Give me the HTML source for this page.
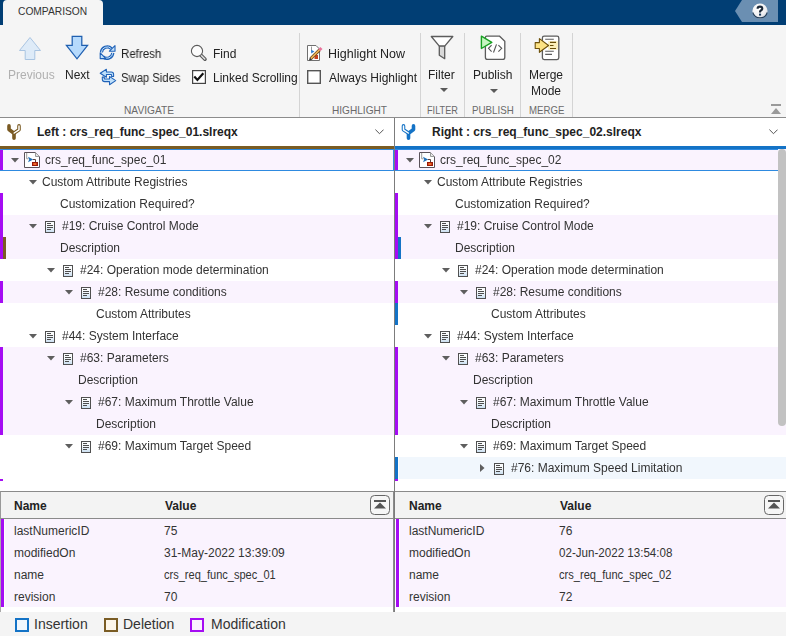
<!DOCTYPE html>
<html><head><meta charset="utf-8"><style>
*{box-sizing:border-box}
html,body{margin:0;padding:0}
body{width:786px;height:636px;overflow:hidden;position:relative;background:#f4f4f4;font-family:"Liberation Sans", sans-serif;color:#222}
.a{position:absolute}
.ic{position:absolute;display:block}
.bg{position:absolute;height:22px}
.bar{position:absolute;width:3px;height:22px}
.tt{position:absolute;height:22px;line-height:22px;font-size:12px;color:#333;white-space:nowrap;will-change:transform}
.rb{position:absolute;font-size:12px;color:#222;white-space:nowrap;line-height:14px;will-change:transform}
.lab{position:absolute;top:103px;font-size:11px;color:#6a6a6a;white-space:nowrap;line-height:14px;transform-origin:0 0}
.ph{position:absolute;top:498px;font-size:12px;font-weight:bold;color:#222;line-height:16px}
.pt{position:absolute;height:22px;line-height:22px;font-size:12px;color:#333;white-space:nowrap;transform-origin:0 0}
.lg{position:absolute;top:615px;font-size:14px;color:#333;line-height:18px;white-space:nowrap}
.sep{position:absolute;top:33px;width:1px;height:84px;background:#d4d4d4}
</style></head><body>
<!-- top bar -->
<div class="a" style="left:0;top:0;width:786px;height:25px;background:#013e74"></div>
<div class="a" style="left:3px;top:0px;width:100px;height:25px;background:#f5f5f5;border-radius:4px 4px 0 0"></div>
<div class="a" style="left:18px;top:4px;font-size:11px;color:#333;line-height:14px;transform:scaleX(0.93);transform-origin:0 0">COMPARISON</div>
<svg class="ic" style="left:735px;top:0" width="44" height="23" viewBox="0 0 44 23"><defs><radialGradient id="hg" cx="0.4" cy="0.3" r="0.8"><stop offset="0" stop-color="#ffffff"/><stop offset="0.6" stop-color="#f0f0f2"/><stop offset="1" stop-color="#c8ccd4"/></radialGradient></defs><path d="M7 0H43V22H7L0 11Z" fill="#6b8fb2"/>
<circle cx="25" cy="11.1" r="7.6" fill="url(#hg)"/>
<path d="M17.8 12.5A7.5 7.5 0 0 0 32.2 12.5" fill="none" stroke="#233f5c" stroke-width="1.1"/>
<path d="M22.6 8.7Q22.6 6.6 25 6.6Q27.3 6.6 27.3 8.5Q27.3 9.7 25.9 10.5Q25 11 25 12V12.6" fill="none" stroke="#1b2838" stroke-width="2.1"/><rect x="24" y="13.6" width="2.1" height="2" fill="#1b3a5c"/></svg>
<!-- ribbon -->
<div class="a" style="left:0;top:25px;width:786px;height:92px;background:#f5f5f5"></div>
<div class="a" style="left:0;top:117px;width:786px;height:1px;background:#8c8c8c"></div>
<div class="sep" style="left:299px"></div>
<div class="sep" style="left:420px"></div>
<div class="sep" style="left:464px"></div>
<div class="sep" style="left:520px"></div>
<div class="sep" style="left:572px"></div>
<!-- ribbon content -->
<svg class="ic" style="left:19px;top:37px" width="23" height="24" viewBox="0 0 23 24"><path d="M11 0.5L21.5 13.5H15.8V22.5H6.2V13.5H0.5Z" fill="#deebf8" stroke="#a9c4e1" stroke-width="1"/></svg>
<div class="rb" style="left:7.8px;top:68px;color:#b0b0b0">Previous</div>
<svg class="ic" style="left:65px;top:35px" width="24" height="25" viewBox="0 0 24 25"><path d="M7.2 1.4H16.8V10.3H22.6L12 23.8L1.4 10.3H7.2Z" fill="#b6dafc" stroke="#1f5fb0" stroke-width="1.25" stroke-linejoin="miter"/></svg>
<div class="rb" style="left:64.5px;top:68px">Next</div>
<!-- Refresh -->
<svg class="ic" style="left:99px;top:44px" width="18" height="17" viewBox="0 0 18 17">
<path d="M2.4 8.4A5.9 5.9 0 0 1 12.4 4.6" fill="none" stroke="#1f62b8" stroke-width="3.2"/>
<path d="M2.4 8.4A5.9 5.9 0 0 1 12.4 4.6" fill="none" stroke="#c4e2fb" stroke-width="1"/>
<path d="M16 1.6V7.2H10.4Z" fill="#c4e2fb" stroke="#1f62b8" stroke-width="1.1" stroke-linejoin="round"/>
<path d="M13.8 8.8A5.9 5.9 0 0 1 3.8 12.6" fill="none" stroke="#1f62b8" stroke-width="3.2"/>
<path d="M13.8 8.8A5.9 5.9 0 0 1 3.8 12.6" fill="none" stroke="#c4e2fb" stroke-width="1"/>
<path d="M1.2 8.8V14.6H6.8Z" fill="#c4e2fb" stroke="#1f62b8" stroke-width="1.1" stroke-linejoin="round"/>
</svg>
<div class="rb" style="left:121px;top:47px;transform:scaleX(0.96);transform-origin:0 0">Refresh</div>
<!-- Swap -->
<svg class="ic" style="left:98px;top:66px" width="20" height="22" viewBox="0 0 20 22">
<path d="M2.2 7.2L8.4 3.2V5.9H13.3Q15.6 5.9 15.6 8.2V10.4H13.6V8.9Q13.6 8.5 13.2 8.5H8.4V11.2Z" fill="#bfe0fb" stroke="#1f62b8" stroke-width="1.05" stroke-linejoin="round"/>
<path d="M17.7 14.6L11.5 18.8V15.6H6.6Q4.3 15.6 4.3 13.3V11.1H6.3V12.6Q6.3 13 6.7 13H11.5V10.4Z" fill="#bfe0fb" stroke="#1f62b8" stroke-width="1.05" stroke-linejoin="round"/>
</svg>
<div class="rb" style="left:121px;top:71px;transform:scaleX(0.94);transform-origin:0 0">Swap Sides</div>
<!-- Find -->
<svg class="ic" style="left:190px;top:44px" width="18" height="18" viewBox="0 0 18 18">
<path d="M10 10.2L15 15.2" stroke="#5a5a5a" stroke-width="3.6" stroke-linecap="round"/>
<path d="M10.3 10.5L14.8 15" stroke="#e2e2e2" stroke-width="1.4" stroke-linecap="round"/>
<circle cx="7" cy="7" r="5.6" fill="#fcfcfc" stroke="#5a5a5a" stroke-width="1.1"/>
</svg>
<div class="rb" style="left:213px;top:47px">Find</div>
<svg class="ic" style="left:192px;top:70px" width="14" height="14" viewBox="0 0 14 14"><rect x="0.6" y="0.6" width="12.8" height="12.8" fill="#fff" stroke="#444" stroke-width="1.2"/><path d="M2.3 6.6L5.4 9.9L11.3 3.2" fill="none" stroke="#111" stroke-width="2.2"/></svg>
<div class="rb" style="left:213px;top:71px">Linked Scrolling</div>
<div class="lab" style="left:124px;transform:scaleX(0.925)">NAVIGATE</div>
<!-- Highlight now -->
<svg class="ic" style="left:306px;top:44px" width="17" height="18" viewBox="0 0 17 18">
<path d="M1.5 1.5H10L13.5 5V16.5H1.5Z" fill="#fff" stroke="#707070" stroke-width="1"/>
<path d="M5.5 2.5V7.5" fill="none" stroke="#999" stroke-width="1"/>
<path d="M5.2 5.8L8.4 7.6L5.2 9.4Z" fill="#2a7ad0"/>
<rect x="8.5" y="11" width="3.5" height="4" fill="#c8401e"/>
<path d="M4.8 14.6L13.6 5.8" stroke="#6a4a1e" stroke-width="3.1"/>
<path d="M4.8 14.6L13.6 5.8" stroke="#f1b457" stroke-width="1.6"/>
<path d="M3 16.6L3.8 13.4L6.2 15.8Z" fill="#333"/>
<path d="M13.4 6L15.4 4" stroke="#e8739b" stroke-width="3.1"/>
</svg>
<div class="rb" style="left:328px;top:47px;transform:scaleX(1.04);transform-origin:0 0">Highlight Now</div>
<svg class="ic" style="left:307px;top:70px" width="14" height="14" viewBox="0 0 14 14"><rect x="0.7" y="0.7" width="12.6" height="12.6" fill="#fff" stroke="#555" stroke-width="1.4"/></svg>
<div class="rb" style="left:329px;top:71px">Always Highlight</div>
<div class="lab" style="left:332px;transform:scaleX(0.917)">HIGHLIGHT</div>
<!-- Filter -->
<svg class="ic" style="left:428px;top:32px" width="28" height="30" viewBox="0 0 28 30">
<path d="M3.3 4.5H24.8L16.7 14.2H11.3Z" fill="#fff" stroke="#5c5c5c" stroke-width="1.3" stroke-linejoin="round"/>
<path d="M11.3 14.2H16.7V26.7L11.3 23.3Z" fill="#d9d9d9" stroke="#5c5c5c" stroke-width="1.3" stroke-linejoin="round"/>
</svg>
<div class="rb" style="left:428px;top:68px">Filter</div>
<svg class="ic" style="left:439.5px;top:88px" width="8" height="4" viewBox="0 0 8 4"><path d="M0 0H8L4 4Z" fill="#5a5a5a"/></svg>
<div class="lab" style="left:427px;transform:scaleX(0.833)">FILTER</div>
<!-- Publish -->
<svg class="ic" style="left:476px;top:32px" width="32" height="30" viewBox="0 0 32 30">
<path d="M10.8 4.2H23.6L28.8 9.2V25.2Q28.8 27.4 26.6 27.4H11.6Q9.4 27.4 9.4 25.2V5.6Q9.4 4.2 10.8 4.2Z" fill="#fff" stroke="#5c5c5c" stroke-width="1.3"/>
<path d="M15.6 13.2L12.5 16.3L15.6 19.6M20.5 12.4L17.5 20.5M22.4 13.2L25.7 16.3L22.4 19.6" fill="none" stroke="#555" stroke-width="1.1"/>
<path d="M5.4 4.2L15.8 10.4L5.4 16.5Z" fill="#c6f6c0" stroke="#17a021" stroke-width="1.4" stroke-linejoin="round"/>
</svg>
<div class="rb" style="left:472.5px;top:68px">Publish</div>
<svg class="ic" style="left:489.5px;top:89px" width="8" height="4" viewBox="0 0 8 4"><path d="M0 0H8L4 4Z" fill="#5a5a5a"/></svg>
<div class="lab" style="left:471.5px;transform:scaleX(0.887)">PUBLISH</div>
<!-- Merge -->
<svg class="ic" style="left:530px;top:32px" width="32" height="30" viewBox="0 0 32 30">
<rect x="12.4" y="4.2" width="16.4" height="23.4" rx="1.8" fill="#fff" stroke="#5c5c5c" stroke-width="1.3"/>
<path d="M15.2 7.3H23.8M15.2 19.3H23.8M15.2 22.4H22" stroke="#5c5c5c" stroke-width="1.1"/>
<rect x="18.2" y="9.2" width="9.6" height="8.5" fill="#fcefb9"/>
<path d="M20 10.4H26M20 13.5H23.5M20 16.5H26" stroke="#6a4e08" stroke-width="1.2"/>
<path d="M5.2 10.6H9.4V6.6L18.6 13.5L9.4 20.3V16.5H5.2Z" fill="#fde383" stroke="#6f520c" stroke-width="1.1" stroke-linejoin="round"/>
</svg>
<div class="rb" style="left:529px;top:68px">Merge</div>
<div class="rb" style="left:530.5px;top:84px">Mode</div>
<div class="lab" style="left:529px;transform:scaleX(0.877)">MERGE</div>
<!-- collapse ribbon -->
<svg class="ic" style="left:771px;top:104px" width="10" height="10" viewBox="0 0 10 10"><rect x="0" y="0" width="10" height="2" fill="#9a9a9a"/><path d="M0 10H10L5 4Z" fill="#9a9a9a"/></svg>

<!-- header -->
<div class="a" style="left:0;top:118px;width:786px;height:28px;background:#fff"></div>
<svg class="ic" style="left:0;top:118px" width="28" height="28" viewBox="0 0 28 28">
<path d="M9 7.9V11.5L14 15.3V20.2" fill="none" stroke="#7a5a22" stroke-width="3.6" stroke-linecap="round" stroke-linejoin="round"/>
<path d="M19 7.9V11.8L14.2 15" fill="none" stroke="#7a5a22" stroke-width="3.6" stroke-linecap="round" stroke-linejoin="round"/>
<path d="M19 7.9V11.8L14.2 15" fill="none" stroke="#fff" stroke-width="1.5" stroke-linecap="round" stroke-linejoin="round"/>
</svg>
<div class="a" style="left:37px;top:125px;font-size:12px;font-weight:bold;line-height:14px;color:#222">Left : crs_req_func_spec_01.slreqx</div>
<svg class="ic" style="left:375px;top:128.5px" width="9" height="6" viewBox="0 0 9 6"><path d="M0.4 0.6L4.5 4.7L8.6 0.6" fill="none" stroke="#555" stroke-width="1"/></svg>
<svg class="ic" style="left:395px;top:118px" width="28" height="28" viewBox="0 0 28 28">
<path d="M18.5 7.9V11.5L13.5 15.3V20.2" fill="none" stroke="#1473c6" stroke-width="3.6" stroke-linecap="round" stroke-linejoin="round"/>
<path d="M8.5 7.9V11.8L13.3 15" fill="none" stroke="#1473c6" stroke-width="3.6" stroke-linecap="round" stroke-linejoin="round"/>
<path d="M8.5 7.9V11.8L13.3 15" fill="none" stroke="#fff" stroke-width="1.5" stroke-linecap="round" stroke-linejoin="round"/>
</svg>
<div class="a" style="left:432px;top:125px;font-size:12px;font-weight:bold;line-height:14px;color:#222">Right : crs_req_func_spec_02.slreqx</div>
<svg class="ic" style="left:769px;top:128.5px" width="9" height="6" viewBox="0 0 9 6"><path d="M0.4 0.6L4.5 4.7L8.6 0.6" fill="none" stroke="#555" stroke-width="1"/></svg>
<!-- tree backgrounds -->
<div class="a" style="left:0;top:149px;width:394px;height:342px;background:#fff"></div>
<div class="a" style="left:395px;top:149px;width:391px;height:342px;background:#fff"></div>
<div class="bg" style="left:3px;top:149px;width:391px;background:#faf3fe"></div>
<div class="bar" style="left:0px;top:149px;background:#a50cf3"></div>
<svg class="ic" style="left:11px;top:158px" width="8" height="5" viewBox="0 0 8 5"><path d="M0 0H8L4 4.5Z" fill="#5e5e5e"/></svg>
<svg class="ic" style="left:24px;top:152px" width="16" height="16" viewBox="0 0 16 16">
<path d="M0.5 0.5H11.5L15.5 4.5V15.5H0.5Z" fill="#fff" stroke="#5a525a"/>
<path d="M11.5 0.5V4.5H15.5" fill="#e6e6e6" stroke="#9a9a9a"/>
<path d="M2.7 1V6.8H4.5" fill="none" stroke="#9a9a9a" stroke-width="1"/>
<path d="M4 4.8L9.2 7.5L4 10.2L5.2 7.5Z" fill="#1f6fb8"/>
<path d="M9 7.5H11.5V10" fill="none" stroke="#5a4040" stroke-width="1"/>
<rect x="8" y="10" width="6" height="4" fill="#9a1a08"/>
<rect x="9.3" y="11" width="3.2" height="2" fill="#f06a2a"/>
</svg>
<div class="tt" style="left:45px;top:149px">crs_req_func_spec_01</div>
<svg class="ic" style="left:29px;top:180px" width="8" height="5" viewBox="0 0 8 5"><path d="M0 0H8L4 4.5Z" fill="#5e5e5e"/></svg>
<div class="tt" style="left:42px;top:171px">Custom Attribute Registries</div>
<div class="bar" style="left:0px;top:193px;background:#a50cf3"></div>
<div class="tt" style="left:60px;top:193px">Customization Required?</div>
<div class="bg" style="left:3px;top:215px;width:391px;background:#faf3fe"></div>
<div class="bar" style="left:0px;top:215px;background:#a50cf3"></div>
<svg class="ic" style="left:29px;top:224px" width="8" height="5" viewBox="0 0 8 5"><path d="M0 0H8L4 4.5Z" fill="#5e5e5e"/></svg>
<svg class="ic" style="left:45px;top:221px" width="10" height="12" viewBox="0 0 10 12"><defs><linearGradient id="dg" x1="0" y1="0" x2="0" y2="1"><stop offset="0.35" stop-color="#fafcfd"/><stop offset="1" stop-color="#c9def0"/></linearGradient></defs><rect x="0.5" y="0.5" width="9" height="11" fill="url(#dg)" stroke="#505050"/><path d="M2 2.5H6M2 4.5H8M2 6.5H8M2 8.5H6" stroke="#4d4d4d" stroke-width="1"/></svg>
<div class="tt" style="left:62px;top:215px">#19: Cruise Control Mode</div>
<div class="bg" style="left:3px;top:237px;width:391px;background:#faf3fe"></div>
<div class="bar" style="left:0px;top:237px;background:#a50cf3"></div>
<div class="bar" style="left:3px;top:237px;background:#7a5c24"></div>
<div class="tt" style="left:60px;top:237px">Description</div>
<svg class="ic" style="left:47px;top:268px" width="8" height="5" viewBox="0 0 8 5"><path d="M0 0H8L4 4.5Z" fill="#5e5e5e"/></svg>
<svg class="ic" style="left:63px;top:265px" width="10" height="12" viewBox="0 0 10 12"><defs><linearGradient id="dg" x1="0" y1="0" x2="0" y2="1"><stop offset="0.35" stop-color="#fafcfd"/><stop offset="1" stop-color="#c9def0"/></linearGradient></defs><rect x="0.5" y="0.5" width="9" height="11" fill="url(#dg)" stroke="#505050"/><path d="M2 2.5H6M2 4.5H8M2 6.5H8M2 8.5H6" stroke="#4d4d4d" stroke-width="1"/></svg>
<div class="tt" style="left:80px;top:259px">#24: Operation mode determination</div>
<div class="bg" style="left:3px;top:281px;width:391px;background:#faf3fe"></div>
<div class="bar" style="left:0px;top:281px;background:#a50cf3"></div>
<svg class="ic" style="left:65px;top:290px" width="8" height="5" viewBox="0 0 8 5"><path d="M0 0H8L4 4.5Z" fill="#5e5e5e"/></svg>
<svg class="ic" style="left:81px;top:287px" width="10" height="12" viewBox="0 0 10 12"><defs><linearGradient id="dg" x1="0" y1="0" x2="0" y2="1"><stop offset="0.35" stop-color="#fafcfd"/><stop offset="1" stop-color="#c9def0"/></linearGradient></defs><rect x="0.5" y="0.5" width="9" height="11" fill="url(#dg)" stroke="#505050"/><path d="M2 2.5H6M2 4.5H8M2 6.5H8M2 8.5H6" stroke="#4d4d4d" stroke-width="1"/></svg>
<div class="tt" style="left:98px;top:281px">#28: Resume conditions</div>
<div class="tt" style="left:96px;top:303px">Custom Attributes</div>
<svg class="ic" style="left:29px;top:334px" width="8" height="5" viewBox="0 0 8 5"><path d="M0 0H8L4 4.5Z" fill="#5e5e5e"/></svg>
<svg class="ic" style="left:45px;top:331px" width="10" height="12" viewBox="0 0 10 12"><defs><linearGradient id="dg" x1="0" y1="0" x2="0" y2="1"><stop offset="0.35" stop-color="#fafcfd"/><stop offset="1" stop-color="#c9def0"/></linearGradient></defs><rect x="0.5" y="0.5" width="9" height="11" fill="url(#dg)" stroke="#505050"/><path d="M2 2.5H6M2 4.5H8M2 6.5H8M2 8.5H6" stroke="#4d4d4d" stroke-width="1"/></svg>
<div class="tt" style="left:62px;top:325px">#44: System Interface</div>
<div class="bg" style="left:3px;top:347px;width:391px;background:#faf3fe"></div>
<div class="bar" style="left:0px;top:347px;background:#a50cf3"></div>
<svg class="ic" style="left:47px;top:356px" width="8" height="5" viewBox="0 0 8 5"><path d="M0 0H8L4 4.5Z" fill="#5e5e5e"/></svg>
<svg class="ic" style="left:63px;top:353px" width="10" height="12" viewBox="0 0 10 12"><defs><linearGradient id="dg" x1="0" y1="0" x2="0" y2="1"><stop offset="0.35" stop-color="#fafcfd"/><stop offset="1" stop-color="#c9def0"/></linearGradient></defs><rect x="0.5" y="0.5" width="9" height="11" fill="url(#dg)" stroke="#505050"/><path d="M2 2.5H6M2 4.5H8M2 6.5H8M2 8.5H6" stroke="#4d4d4d" stroke-width="1"/></svg>
<div class="tt" style="left:80px;top:347px">#63: Parameters</div>
<div class="bg" style="left:3px;top:369px;width:391px;background:#faf3fe"></div>
<div class="bar" style="left:0px;top:369px;background:#a50cf3"></div>
<div class="tt" style="left:78px;top:369px">Description</div>
<div class="bg" style="left:3px;top:391px;width:391px;background:#faf3fe"></div>
<div class="bar" style="left:0px;top:391px;background:#a50cf3"></div>
<svg class="ic" style="left:65px;top:400px" width="8" height="5" viewBox="0 0 8 5"><path d="M0 0H8L4 4.5Z" fill="#5e5e5e"/></svg>
<svg class="ic" style="left:81px;top:397px" width="10" height="12" viewBox="0 0 10 12"><defs><linearGradient id="dg" x1="0" y1="0" x2="0" y2="1"><stop offset="0.35" stop-color="#fafcfd"/><stop offset="1" stop-color="#c9def0"/></linearGradient></defs><rect x="0.5" y="0.5" width="9" height="11" fill="url(#dg)" stroke="#505050"/><path d="M2 2.5H6M2 4.5H8M2 6.5H8M2 8.5H6" stroke="#4d4d4d" stroke-width="1"/></svg>
<div class="tt" style="left:98px;top:391px">#67: Maximum Throttle Value</div>
<div class="bg" style="left:3px;top:413px;width:391px;background:#faf3fe"></div>
<div class="bar" style="left:0px;top:413px;background:#a50cf3"></div>
<div class="tt" style="left:96px;top:413px">Description</div>
<svg class="ic" style="left:65px;top:444px" width="8" height="5" viewBox="0 0 8 5"><path d="M0 0H8L4 4.5Z" fill="#5e5e5e"/></svg>
<svg class="ic" style="left:81px;top:441px" width="10" height="12" viewBox="0 0 10 12"><defs><linearGradient id="dg" x1="0" y1="0" x2="0" y2="1"><stop offset="0.35" stop-color="#fafcfd"/><stop offset="1" stop-color="#c9def0"/></linearGradient></defs><rect x="0.5" y="0.5" width="9" height="11" fill="url(#dg)" stroke="#505050"/><path d="M2 2.5H6M2 4.5H8M2 6.5H8M2 8.5H6" stroke="#4d4d4d" stroke-width="1"/></svg>
<div class="tt" style="left:98px;top:435px">#69: Maximum Target Speed</div>
<div style="position:absolute;left:0px;top:479px;width:3px;height:2px;background:#a50cf3"></div>
<div class="bg" style="left:398px;top:149px;width:391px;background:#faf3fe"></div>
<div class="bar" style="left:395px;top:149px;background:#a50cf3"></div>
<svg class="ic" style="left:406px;top:158px" width="8" height="5" viewBox="0 0 8 5"><path d="M0 0H8L4 4.5Z" fill="#5e5e5e"/></svg>
<svg class="ic" style="left:419px;top:152px" width="16" height="16" viewBox="0 0 16 16">
<path d="M0.5 0.5H11.5L15.5 4.5V15.5H0.5Z" fill="#fff" stroke="#5a525a"/>
<path d="M11.5 0.5V4.5H15.5" fill="#e6e6e6" stroke="#9a9a9a"/>
<path d="M2.7 1V6.8H4.5" fill="none" stroke="#9a9a9a" stroke-width="1"/>
<path d="M4 4.8L9.2 7.5L4 10.2L5.2 7.5Z" fill="#1f6fb8"/>
<path d="M9 7.5H11.5V10" fill="none" stroke="#5a4040" stroke-width="1"/>
<rect x="8" y="10" width="6" height="4" fill="#9a1a08"/>
<rect x="9.3" y="11" width="3.2" height="2" fill="#f06a2a"/>
</svg>
<div class="tt" style="left:440px;top:149px">crs_req_func_spec_02</div>
<svg class="ic" style="left:424px;top:180px" width="8" height="5" viewBox="0 0 8 5"><path d="M0 0H8L4 4.5Z" fill="#5e5e5e"/></svg>
<div class="tt" style="left:437px;top:171px">Custom Attribute Registries</div>
<div class="bar" style="left:395px;top:193px;background:#a50cf3"></div>
<div class="tt" style="left:455px;top:193px">Customization Required?</div>
<div class="bg" style="left:398px;top:215px;width:391px;background:#faf3fe"></div>
<div class="bar" style="left:395px;top:215px;background:#a50cf3"></div>
<svg class="ic" style="left:424px;top:224px" width="8" height="5" viewBox="0 0 8 5"><path d="M0 0H8L4 4.5Z" fill="#5e5e5e"/></svg>
<svg class="ic" style="left:440px;top:221px" width="10" height="12" viewBox="0 0 10 12"><defs><linearGradient id="dg" x1="0" y1="0" x2="0" y2="1"><stop offset="0.35" stop-color="#fafcfd"/><stop offset="1" stop-color="#c9def0"/></linearGradient></defs><rect x="0.5" y="0.5" width="9" height="11" fill="url(#dg)" stroke="#505050"/><path d="M2 2.5H6M2 4.5H8M2 6.5H8M2 8.5H6" stroke="#4d4d4d" stroke-width="1"/></svg>
<div class="tt" style="left:457px;top:215px">#19: Cruise Control Mode</div>
<div class="bg" style="left:398px;top:237px;width:391px;background:#faf3fe"></div>
<div class="bar" style="left:395px;top:237px;background:#a50cf3"></div>
<div class="bar" style="left:398px;top:237px;background:#1473c6"></div>
<div class="tt" style="left:455px;top:237px">Description</div>
<svg class="ic" style="left:442px;top:268px" width="8" height="5" viewBox="0 0 8 5"><path d="M0 0H8L4 4.5Z" fill="#5e5e5e"/></svg>
<svg class="ic" style="left:458px;top:265px" width="10" height="12" viewBox="0 0 10 12"><defs><linearGradient id="dg" x1="0" y1="0" x2="0" y2="1"><stop offset="0.35" stop-color="#fafcfd"/><stop offset="1" stop-color="#c9def0"/></linearGradient></defs><rect x="0.5" y="0.5" width="9" height="11" fill="url(#dg)" stroke="#505050"/><path d="M2 2.5H6M2 4.5H8M2 6.5H8M2 8.5H6" stroke="#4d4d4d" stroke-width="1"/></svg>
<div class="tt" style="left:475px;top:259px">#24: Operation mode determination</div>
<div class="bg" style="left:398px;top:281px;width:391px;background:#faf3fe"></div>
<div class="bar" style="left:395px;top:281px;background:#a50cf3"></div>
<svg class="ic" style="left:460px;top:290px" width="8" height="5" viewBox="0 0 8 5"><path d="M0 0H8L4 4.5Z" fill="#5e5e5e"/></svg>
<svg class="ic" style="left:476px;top:287px" width="10" height="12" viewBox="0 0 10 12"><defs><linearGradient id="dg" x1="0" y1="0" x2="0" y2="1"><stop offset="0.35" stop-color="#fafcfd"/><stop offset="1" stop-color="#c9def0"/></linearGradient></defs><rect x="0.5" y="0.5" width="9" height="11" fill="url(#dg)" stroke="#505050"/><path d="M2 2.5H6M2 4.5H8M2 6.5H8M2 8.5H6" stroke="#4d4d4d" stroke-width="1"/></svg>
<div class="tt" style="left:493px;top:281px">#28: Resume conditions</div>
<div class="bar" style="left:395px;top:303px;background:#1473c6"></div>
<div class="tt" style="left:491px;top:303px">Custom Attributes</div>
<svg class="ic" style="left:424px;top:334px" width="8" height="5" viewBox="0 0 8 5"><path d="M0 0H8L4 4.5Z" fill="#5e5e5e"/></svg>
<svg class="ic" style="left:440px;top:331px" width="10" height="12" viewBox="0 0 10 12"><defs><linearGradient id="dg" x1="0" y1="0" x2="0" y2="1"><stop offset="0.35" stop-color="#fafcfd"/><stop offset="1" stop-color="#c9def0"/></linearGradient></defs><rect x="0.5" y="0.5" width="9" height="11" fill="url(#dg)" stroke="#505050"/><path d="M2 2.5H6M2 4.5H8M2 6.5H8M2 8.5H6" stroke="#4d4d4d" stroke-width="1"/></svg>
<div class="tt" style="left:457px;top:325px">#44: System Interface</div>
<div class="bg" style="left:398px;top:347px;width:391px;background:#faf3fe"></div>
<div class="bar" style="left:395px;top:347px;background:#a50cf3"></div>
<svg class="ic" style="left:442px;top:356px" width="8" height="5" viewBox="0 0 8 5"><path d="M0 0H8L4 4.5Z" fill="#5e5e5e"/></svg>
<svg class="ic" style="left:458px;top:353px" width="10" height="12" viewBox="0 0 10 12"><defs><linearGradient id="dg" x1="0" y1="0" x2="0" y2="1"><stop offset="0.35" stop-color="#fafcfd"/><stop offset="1" stop-color="#c9def0"/></linearGradient></defs><rect x="0.5" y="0.5" width="9" height="11" fill="url(#dg)" stroke="#505050"/><path d="M2 2.5H6M2 4.5H8M2 6.5H8M2 8.5H6" stroke="#4d4d4d" stroke-width="1"/></svg>
<div class="tt" style="left:475px;top:347px">#63: Parameters</div>
<div class="bg" style="left:398px;top:369px;width:391px;background:#faf3fe"></div>
<div class="bar" style="left:395px;top:369px;background:#a50cf3"></div>
<div class="tt" style="left:473px;top:369px">Description</div>
<div class="bg" style="left:398px;top:391px;width:391px;background:#faf3fe"></div>
<div class="bar" style="left:395px;top:391px;background:#a50cf3"></div>
<svg class="ic" style="left:460px;top:400px" width="8" height="5" viewBox="0 0 8 5"><path d="M0 0H8L4 4.5Z" fill="#5e5e5e"/></svg>
<svg class="ic" style="left:476px;top:397px" width="10" height="12" viewBox="0 0 10 12"><defs><linearGradient id="dg" x1="0" y1="0" x2="0" y2="1"><stop offset="0.35" stop-color="#fafcfd"/><stop offset="1" stop-color="#c9def0"/></linearGradient></defs><rect x="0.5" y="0.5" width="9" height="11" fill="url(#dg)" stroke="#505050"/><path d="M2 2.5H6M2 4.5H8M2 6.5H8M2 8.5H6" stroke="#4d4d4d" stroke-width="1"/></svg>
<div class="tt" style="left:493px;top:391px">#67: Maximum Throttle Value</div>
<div class="bg" style="left:398px;top:413px;width:391px;background:#faf3fe"></div>
<div class="bar" style="left:395px;top:413px;background:#a50cf3"></div>
<div class="tt" style="left:491px;top:413px">Description</div>
<svg class="ic" style="left:460px;top:444px" width="8" height="5" viewBox="0 0 8 5"><path d="M0 0H8L4 4.5Z" fill="#5e5e5e"/></svg>
<svg class="ic" style="left:476px;top:441px" width="10" height="12" viewBox="0 0 10 12"><defs><linearGradient id="dg" x1="0" y1="0" x2="0" y2="1"><stop offset="0.35" stop-color="#fafcfd"/><stop offset="1" stop-color="#c9def0"/></linearGradient></defs><rect x="0.5" y="0.5" width="9" height="11" fill="url(#dg)" stroke="#505050"/><path d="M2 2.5H6M2 4.5H8M2 6.5H8M2 8.5H6" stroke="#4d4d4d" stroke-width="1"/></svg>
<div class="tt" style="left:493px;top:435px">#69: Maximum Target Speed</div>
<div class="bg" style="left:399px;top:457px;width:391px;background:#f1f7fd"></div>
<div class="bar" style="left:395px;top:457px;background:#1473c6"></div>
<svg class="ic" style="left:480px;top:464px" width="5" height="8" viewBox="0 0 5 8"><path d="M0 0V8L4.5 4Z" fill="#5e5e5e"/></svg>
<svg class="ic" style="left:494px;top:463px" width="10" height="12" viewBox="0 0 10 12"><defs><linearGradient id="dg" x1="0" y1="0" x2="0" y2="1"><stop offset="0.35" stop-color="#fafcfd"/><stop offset="1" stop-color="#c9def0"/></linearGradient></defs><rect x="0.5" y="0.5" width="9" height="11" fill="url(#dg)" stroke="#505050"/><path d="M2 2.5H6M2 4.5H8M2 6.5H8M2 8.5H6" stroke="#4d4d4d" stroke-width="1"/></svg>
<div class="tt" style="left:511px;top:457px">#76: Maximum Speed Limitation</div>
<div style="position:absolute;left:395px;top:479px;width:3px;height:2px;background:#a50cf3"></div><!-- header bars -->
<div class="a" style="left:0;top:146px;width:394px;height:3px;background:#7a5c24"></div>
<div class="a" style="left:395px;top:146px;width:391px;height:3px;background:#1473c6"></div>
<!-- selection borders -->
<div class="a" style="left:0;top:149px;width:394px;height:22px;border:1px solid #2e8ae0;border-left:none"></div>
<div class="a" style="left:395px;top:149px;width:383px;height:1px;background:#2e8ae0"></div>
<div class="a" style="left:395px;top:170px;width:383px;height:1px;background:#2e8ae0"></div>
<!-- scrollbar -->
<div class="a" style="left:778px;top:149px;width:8px;height:277px;background:#c2c2c2;border-radius:4px"></div>
<!-- divider -->
<!-- property panels -->
<div class="a" style="left:0;top:491px;width:394px;height:121px;background:#fff;border-left:1px solid #aaa"></div>
<div class="a" style="left:395px;top:491px;width:391px;height:121px;background:#fff"></div>
<div class="a" style="left:0;top:491px;width:394px;height:28px;background:#f3f3f3;border-top:1px solid #8a8a8a;border-bottom:1px solid #8a8a8a;border-left:1px solid #999"></div>
<div class="a" style="left:395px;top:491px;width:391px;height:28px;background:#f3f3f3;border-top:1px solid #8a8a8a;border-bottom:1px solid #8a8a8a"></div>
<div class="ph" style="left:14px">Name</div><div class="ph" style="left:165px">Value</div>
<div class="ph" style="left:409px">Name</div><div class="ph" style="left:560px">Value</div>
<svg class="ic" style="left:370px;top:495px" width="20" height="20" viewBox="0 0 20 20"><rect x="0.5" y="0.5" width="19" height="19" rx="4" fill="#f6f6f6" stroke="#666"/><rect x="4" y="5" width="12" height="2" fill="#555"/><path d="M4 13.5H16L10 7.5Z" fill="#555"/></svg>
<svg class="ic" style="left:764px;top:495px" width="20" height="20" viewBox="0 0 20 20"><rect x="0.5" y="0.5" width="19" height="19" rx="4" fill="#f6f6f6" stroke="#666"/><rect x="4" y="5" width="12" height="2" fill="#555"/><path d="M4 13.5H16L10 7.5Z" fill="#555"/></svg>
<div class="a" style="left:5px;top:519px;width:388px;height:88px;background:#faf3fe"></div>
<div class="a" style="left:1px;top:519px;width:3px;height:88px;background:#a50cf3"></div>
<div class="a" style="left:400px;top:519px;width:386px;height:88px;background:#faf3fe"></div>
<div class="a" style="left:396px;top:519px;width:3px;height:88px;background:#a50cf3"></div>
<div class="pt" style="left:14px;top:520px">lastNumericID</div><div class="pt" style="left:164px;top:520px">75</div>
<div class="pt" style="left:14px;top:542px">modifiedOn</div><div class="pt" style="left:164px;top:542px">31-May-2022 13:39:09</div>
<div class="pt" style="left:14px;top:564px">name</div><div class="pt" style="left:164px;top:564px;transform:scaleX(0.92)">crs_req_func_spec_01</div>
<div class="pt" style="left:14px;top:586px">revision</div><div class="pt" style="left:164px;top:586px">70</div>
<div class="pt" style="left:409px;top:520px">lastNumericID</div><div class="pt" style="left:559px;top:520px">76</div>
<div class="pt" style="left:409px;top:542px">modifiedOn</div><div class="pt" style="left:559px;top:542px;transform:scaleX(0.966)">02-Jun-2022 13:54:08</div>
<div class="pt" style="left:409px;top:564px">name</div><div class="pt" style="left:559px;top:564px;transform:scaleX(0.925)">crs_req_func_spec_02</div>
<div class="pt" style="left:409px;top:586px">revision</div><div class="pt" style="left:559px;top:586px">72</div>
<!-- legend -->
<div class="a" style="left:15px;top:618px;width:14px;height:14px;border:2px solid #1473c6;background:#f1f7fd"></div>
<div class="lg" style="left:34px">Insertion</div>
<div class="a" style="left:104px;top:618px;width:14px;height:14px;border:2px solid #7a5c24;background:#fdf6ea"></div>
<div class="lg" style="left:123px">Deletion</div>
<div class="a" style="left:190px;top:618px;width:14px;height:14px;border:2px solid #a50cf3;background:#faf3fe"></div>
<div class="lg" style="left:211px">Modification</div>

<!-- dividers -->
<div class="a" style="left:394px;top:118px;width:1px;height:494px;background:#7c7c7c"></div>
<div class="a" style="left:393px;top:491px;width:1px;height:121px;background:#8a8a8a"></div>

</body></html>
